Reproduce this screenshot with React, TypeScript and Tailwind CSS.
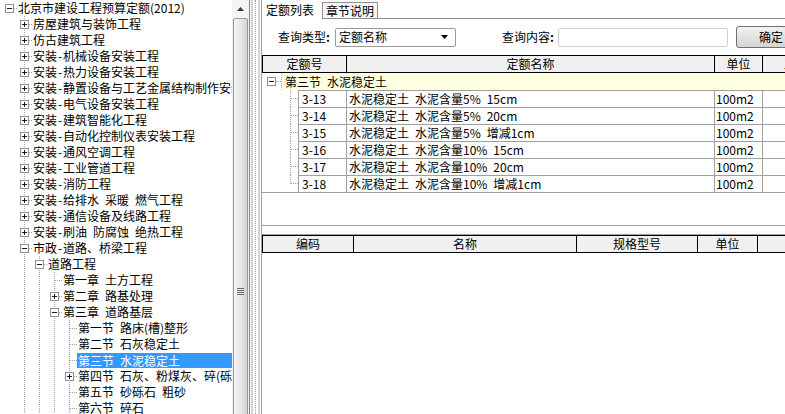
import React from "react";

type Node = { l: number; t: string; b?: "p" | "m"; sel?: boolean };

const tree: Node[] = [
  { l: 0, t: "北京市建设工程预算定额(2012)", b: "m" },
  { l: 1, t: "房屋建筑与装饰工程", b: "p" },
  { l: 1, t: "仿古建筑工程", b: "p" },
  { l: 1, t: "安装-机械设备安装工程", b: "p" },
  { l: 1, t: "安装-热力设备安装工程", b: "p" },
  { l: 1, t: "安装-静置设备与工艺金属结构制作安装工程", b: "p" },
  { l: 1, t: "安装-电气设备安装工程", b: "p" },
  { l: 1, t: "安装-建筑智能化工程", b: "p" },
  { l: 1, t: "安装-自动化控制仪表安装工程", b: "p" },
  { l: 1, t: "安装-通风空调工程", b: "p" },
  { l: 1, t: "安装-工业管道工程", b: "p" },
  { l: 1, t: "安装-消防工程", b: "p" },
  { l: 1, t: "安装-给排水\u2002采暖\u2002燃气工程", b: "p" },
  { l: 1, t: "安装-通信设备及线路工程", b: "p" },
  { l: 1, t: "安装-刷油\u2002防腐蚀\u2002绝热工程", b: "p" },
  { l: 1, t: "市政-道路、桥梁工程", b: "m" },
  { l: 2, t: "道路工程", b: "m" },
  { l: 3, t: "第一章\u2002土方工程" },
  { l: 3, t: "第二章\u2002路基处理", b: "p" },
  { l: 3, t: "第三章\u2002道路基层", b: "m" },
  { l: 4, t: "第一节\u2002路床(槽)整形" },
  { l: 4, t: "第二节\u2002石灰稳定土" },
  { l: 4, t: "第三节\u2002水泥稳定土", sel: true },
  { l: 4, t: "第四节\u2002石灰、粉煤灰、碎(砾)石", b: "p" },
  { l: 4, t: "第五节\u2002砂砾石\u2002粗砂" },
  { l: 4, t: "第六节\u2002碎石" },
];

const LINE = "#a0a0a0";

function Label({ t }: { t: string }) {
  const parts = t.split("-");
  return (
    <>
      {parts.map((p, i) => (
        <React.Fragment key={i}>
          {i > 0 && <span className="inline-block w-[6px] text-center">-</span>}
          {p}
        </React.Fragment>
      ))}
    </>
  );
}

function Box({ x, y, kind }: { x: number; y: number; kind: "p" | "m" }) {
  return (
    <g>
      <rect x={x + 0.5} y={y + 0.5} width="8" height="8" fill="#fff" stroke="#8e8f8f" />
      <line x1={x + 2} y1={y + 4.5} x2={x + 7} y2={y + 4.5} stroke="#1a1a1a" />
      {kind === "p" && <line x1={x + 4.5} y1={y + 2} x2={x + 4.5} y2={y + 7} stroke="#1a1a1a" />}
    </g>
  );
}

function TreeCell({ v, h, box }: { v: boolean; h: boolean; box?: "p" | "m" }) {
  return (
    <svg width="15" height="16" className="block shrink-0">
      {v && <line x1="7.5" y1="0" x2="7.5" y2="16" stroke={LINE} strokeDasharray="1 1" />}
      {h && <line x1="8" y1="8.5" x2="15" y2="8.5" stroke={LINE} strokeDasharray="1 1" />}
      {box && <Box x={3} y={4} kind={box} />}
    </svg>
  );
}

function TreeRow({ n }: { n: Node }) {
  const cells = [];
  for (let k = 0; k < n.l; k++) {
    cells.push(<TreeCell key={k} v={k >= 1} h={false} />);
  }
  return (
    <div className="flex h-[16px] items-center whitespace-nowrap">
      <div className="w-[2px] shrink-0" />
      {cells}
      <TreeCell v={n.l >= 1} h={true} box={n.b} />
      {n.sel ? (
        <span className="flex-1 h-[15px] leading-[15px] pl-[1px] bg-[#3399ff] text-white">
          <Label t={n.t} />
        </span>
      ) : (
        <span className="pl-[1px]">
          <Label t={n.t} />
        </span>
      )}
    </div>
  );
}

function Scrollbar() {
  return (
    <div className="w-[17px] shrink-0 flex flex-col bg-[#f0f0f0] overflow-hidden">
      <div className="h-[18px] shrink-0 flex items-center justify-center bg-[#f4f4f4]">
        <svg width="7" height="4" className="block">
          <polygon points="3.5,0 7,4 0,4" fill="#3c3c3c" />
        </svg>
      </div>
      <div className="h-[600px] shrink-0 mx-[1px] rounded-[2px] border border-[#9a9a9a] bg-gradient-to-r from-[#f6f6f6] via-[#e8e8e8] to-[#d2d2d2] flex flex-col items-center pt-[269px]">
        <div className="flex flex-col gap-[1px]">
          <div className="w-[7px] h-px bg-[#6a6a6a]" />
          <div className="w-[7px] h-px bg-[#6a6a6a]" />
          <div className="w-[7px] h-px bg-[#6a6a6a]" />
          <div className="w-[7px] h-px bg-[#6a6a6a]" />
        </div>
      </div>
    </div>
  );
}

function Grid1Row({ code, name, last }: { code: string; name: string; last: boolean }) {
  return (
    <div className="flex h-[17px] shrink-0">
      <svg width="36" height="17" className="block shrink-0">
        <line x1="28.5" y1="0" x2="28.5" y2={last ? 9 : 17} stroke={LINE} strokeDasharray="1 1" />
        <line x1="29" y1="8.5" x2="36" y2="8.5" stroke={LINE} strokeDasharray="1 1" />
      </svg>
      <div className="w-[48px] shrink-0 border-t border-l border-[#a0a0a0] pl-[3px] leading-[16px]">{code}</div>
      <div className="w-[368px] shrink-0 border-t border-l border-[#a0a0a0] pl-[2px] leading-[16px] whitespace-nowrap">{name}</div>
      <div className="w-[48px] shrink-0 border-t border-l border-[#a0a0a0] pl-[1px] leading-[16px]">100m2</div>
      <div className="flex-1 border-t border-l border-[#a0a0a0]" />
    </div>
  );
}

const rows = [
  ["3-13", "水泥稳定土\u2002水泥含量5%\u200215cm"],
  ["3-14", "水泥稳定土\u2002水泥含量5%\u200220cm"],
  ["3-15", "水泥稳定土\u2002水泥含量5%\u2002增减1cm"],
  ["3-16", "水泥稳定土\u2002水泥含量10%\u200215cm"],
  ["3-17", "水泥稳定土\u2002水泥含量10%\u200220cm"],
  ["3-18", "水泥稳定土\u2002水泥含量10%\u2002增减1cm"],
];

export default function App() {
  return (
    <div className="w-[785px] h-[414px] overflow-hidden flex bg-white text-[12px] leading-[16px] text-black font-['Noto_Sans_CJK_SC',sans-serif]">
      {/* Left tree panel */}
      <div className="w-[250px] shrink-0 flex border-r border-[#828790]">
        <div className="w-[232px] shrink-0 overflow-hidden flex flex-col">
          {tree.map((n, i) => (
            <TreeRow key={i} n={n} />
          ))}
        </div>
        <Scrollbar />
      </div>

      {/* Splitter */}
      <div className="w-[11px] shrink-0 flex bg-white">
        <div className="w-[1px]" />
        <div className="w-[2px] bg-[#d4d4d4]" />
        <div className="w-[2px]" />
        <div className="w-0 border-l border-dotted border-[#8a9ab0]" />
        <div className="w-[2px]" />
        <div className="w-[2px] bg-[#d4d4d4]" />
      </div>

      {/* Right panel */}
      <div className="flex-1 min-w-0 flex flex-col border-l border-[#a0a0a0] overflow-hidden">
        {/* Tabs */}
        <div className="h-[19px] shrink-0 flex">
          <div className="w-[60px] shrink-0 flex items-center pl-[4px]">定额列表</div>
          <div className="w-[56px] shrink-0 mt-[2px] h-[17px] border border-[#919191] bg-[#f7f7f7] flex items-center justify-center">
            章节说明
          </div>
          <div className="flex-1 border-b border-[#919191]" />
        </div>

        {/* Query row */}
        <div className="h-[36px] shrink-0 flex items-center pl-[16px] whitespace-nowrap">
          <div className="w-[57px] shrink-0">
            查询类型<span className="font-bold">:</span>
          </div>
          <div className="w-[121px] h-[19px] shrink-0 border border-[#9a9a9a] rounded-[2px] bg-white flex items-center pl-[3px] pr-[7px]">
            <span className="flex-1">定额名称</span>
            <svg width="7" height="4" className="block">
              <polygon points="0,0 7,0 3.5,4" fill="#000" />
            </svg>
          </div>
          <div className="w-[56px] shrink-0 ml-[46px]">
            查询内容<span className="font-bold">:</span>
          </div>
          <div className="w-[170px] h-[19px] shrink-0 border border-[#cfcfcf] rounded-[2px] bg-white" />
          <div className="w-[70px] h-[22px] shrink-0 ml-[8px] border border-[#707070] rounded-[3px] bg-gradient-to-b from-[#f2f2f2] to-[#d4d4d4] flex items-center justify-center">
            确定
          </div>
        </div>

        {/* Grid 1 */}
        <div className="h-[171px] shrink-0 flex flex-col border-b border-[#a0a0a0]">
          <div className="h-[18px] shrink-0 flex border-y border-l border-black bg-[#f0f0f0] leading-[16px]">
            <div className="w-[84px] shrink-0 border-r border-black text-center">定额号</div>
            <div className="w-[368px] shrink-0 border-r border-black text-center">定额名称</div>
            <div className="w-[48px] shrink-0 border-r border-black text-center">单位</div>
            <div className="flex-1 pl-[21px] whitespace-nowrap">工程量</div>
          </div>
          <div className="h-[17px] shrink-0 flex">
            <svg width="19" height="17" className="block shrink-0">
              <Box x={5} y={4} kind="m" />
              <line x1="14" y1="8.5" x2="19" y2="8.5" stroke={LINE} strokeDasharray="1 1" />
            </svg>
            <div className="flex-1 bg-[#ffffe1] border-l border-dotted border-[#b0b0b0] pl-[3px] leading-[17px] whitespace-nowrap">
              第三节{"\u2002"}水泥稳定土
            </div>
          </div>
          {rows.map(([c, n], i) => (
            <Grid1Row key={c} code={c} name={n} last={i === rows.length - 1} />
          ))}
          <div className="h-px shrink-0 bg-[#a0a0a0]" />
          <div className="flex-1" />
        </div>

        <div className="h-[8px] shrink-0" />

        {/* Grid 2 */}
        <div className="flex-1 flex flex-col border-t border-[#a0a0a0]">
          <div className="h-[18px] shrink-0 flex border-y border-l border-black bg-[#f0f0f0] leading-[16px]">
            <div className="w-[91px] shrink-0 border-r border-black text-center">编码</div>
            <div className="w-[223px] shrink-0 border-r border-black text-center">名称</div>
            <div className="w-[121px] shrink-0 border-r border-black text-center">规格型号</div>
            <div className="w-[60px] shrink-0 border-r border-black text-center">单位</div>
            <div className="flex-1" />
          </div>
          <div className="flex-1" />
        </div>
      </div>
    </div>
  );
}
